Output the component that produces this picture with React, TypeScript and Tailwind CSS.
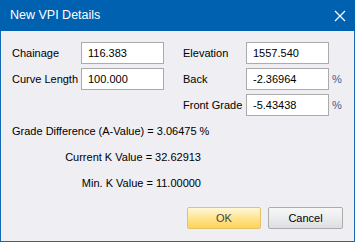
import React from 'react';

const font = { fontFamily: '"Liberation Sans", Arial, sans-serif' };

function Field({ value, pct = false }: { value: string; pct?: boolean }) {
  return (
    <div className='flex items-center'>
      <div className='flex h-[22px] w-[83px] shrink-0 items-center border border-[#ababab] bg-white pl-[6px] text-[11px] text-black'>{value}</div>
      {pct ? <span className='ml-[3px] text-[11px] text-[#3a5f96]'>%</span> : null}
    </div>
  );
}

function App() {
  return (
    <div className='flex h-[242px] w-[355px] flex-col border-x border-b border-[#1569b5] bg-[#eeeef3]' style={font}>
      <div className='-mx-px flex h-[31px] items-center justify-between bg-[#0061b0] pl-[10px] pr-[9px] text-white'>
        <span className='text-[12.5px]'>New VPI Details</span>
        <svg width='12' height='12' viewBox='0 0 12 12'>
          <path d='M1 1 L11 11 M11 1 L1 11' stroke='white' strokeWidth='1.2' />
        </svg>
      </div>
      <div className='flex flex-1 flex-col px-[11px] pt-[11px] text-[11px] text-black'>
        <div className='flex'>
          <div className='flex w-[171px] shrink-0 flex-col gap-[4px]'>
            <div className='flex items-center'>
              <span className='w-[69px] shrink-0 whitespace-nowrap'>Chainage</span>
              <Field value='116.383' />
            </div>
            <div className='flex items-center'>
              <span className='w-[69px] shrink-0 whitespace-nowrap'>Curve Length</span>
              <Field value='100.000' />
            </div>
          </div>
          <div className='flex flex-col gap-[4px]'>
            <div className='flex items-center'>
              <span className='w-[63px] shrink-0 whitespace-nowrap'>Elevation</span>
              <Field value='1557.540' />
            </div>
            <div className='flex items-center'>
              <span className='w-[63px] shrink-0 whitespace-nowrap'>Back</span>
              <Field value='-2.36964' pct />
            </div>
            <div className='flex items-center'>
              <span className='w-[63px] shrink-0 whitespace-nowrap'>Front Grade</span>
              <Field value='-5.43438' pct />
            </div>
          </div>
        </div>
        <div className='mt-[2px] flex w-[189px] flex-col'>
          <div className='flex h-[26px] items-center whitespace-nowrap'>Grade Difference (A-Value) = 3.06475 %</div>
          <div className='flex h-[26px] items-center justify-end whitespace-nowrap'>Current K Value = 32.62913</div>
          <div className='flex h-[26px] items-center justify-end whitespace-nowrap'>Min. K Value = 11.00000</div>
        </div>
        <div className='mt-auto mb-[12px] flex justify-end gap-[7px]'>
          <button className='h-[22px] w-[74px] rounded-[2px] border border-[#e3c36b] bg-[linear-gradient(#fff7d8,#ffe38a_55%,#fdd35a)] text-[11px] text-[#444]'>OK</button>
          <button className='h-[22px] w-[75px] rounded-[2px] border border-[#acacac] bg-[linear-gradient(#f7f7f8,#ebecee_50%,#dcdee2)] text-[11px] text-black'>Cancel</button>
        </div>
      </div>
    </div>
  );
}

export default App;
